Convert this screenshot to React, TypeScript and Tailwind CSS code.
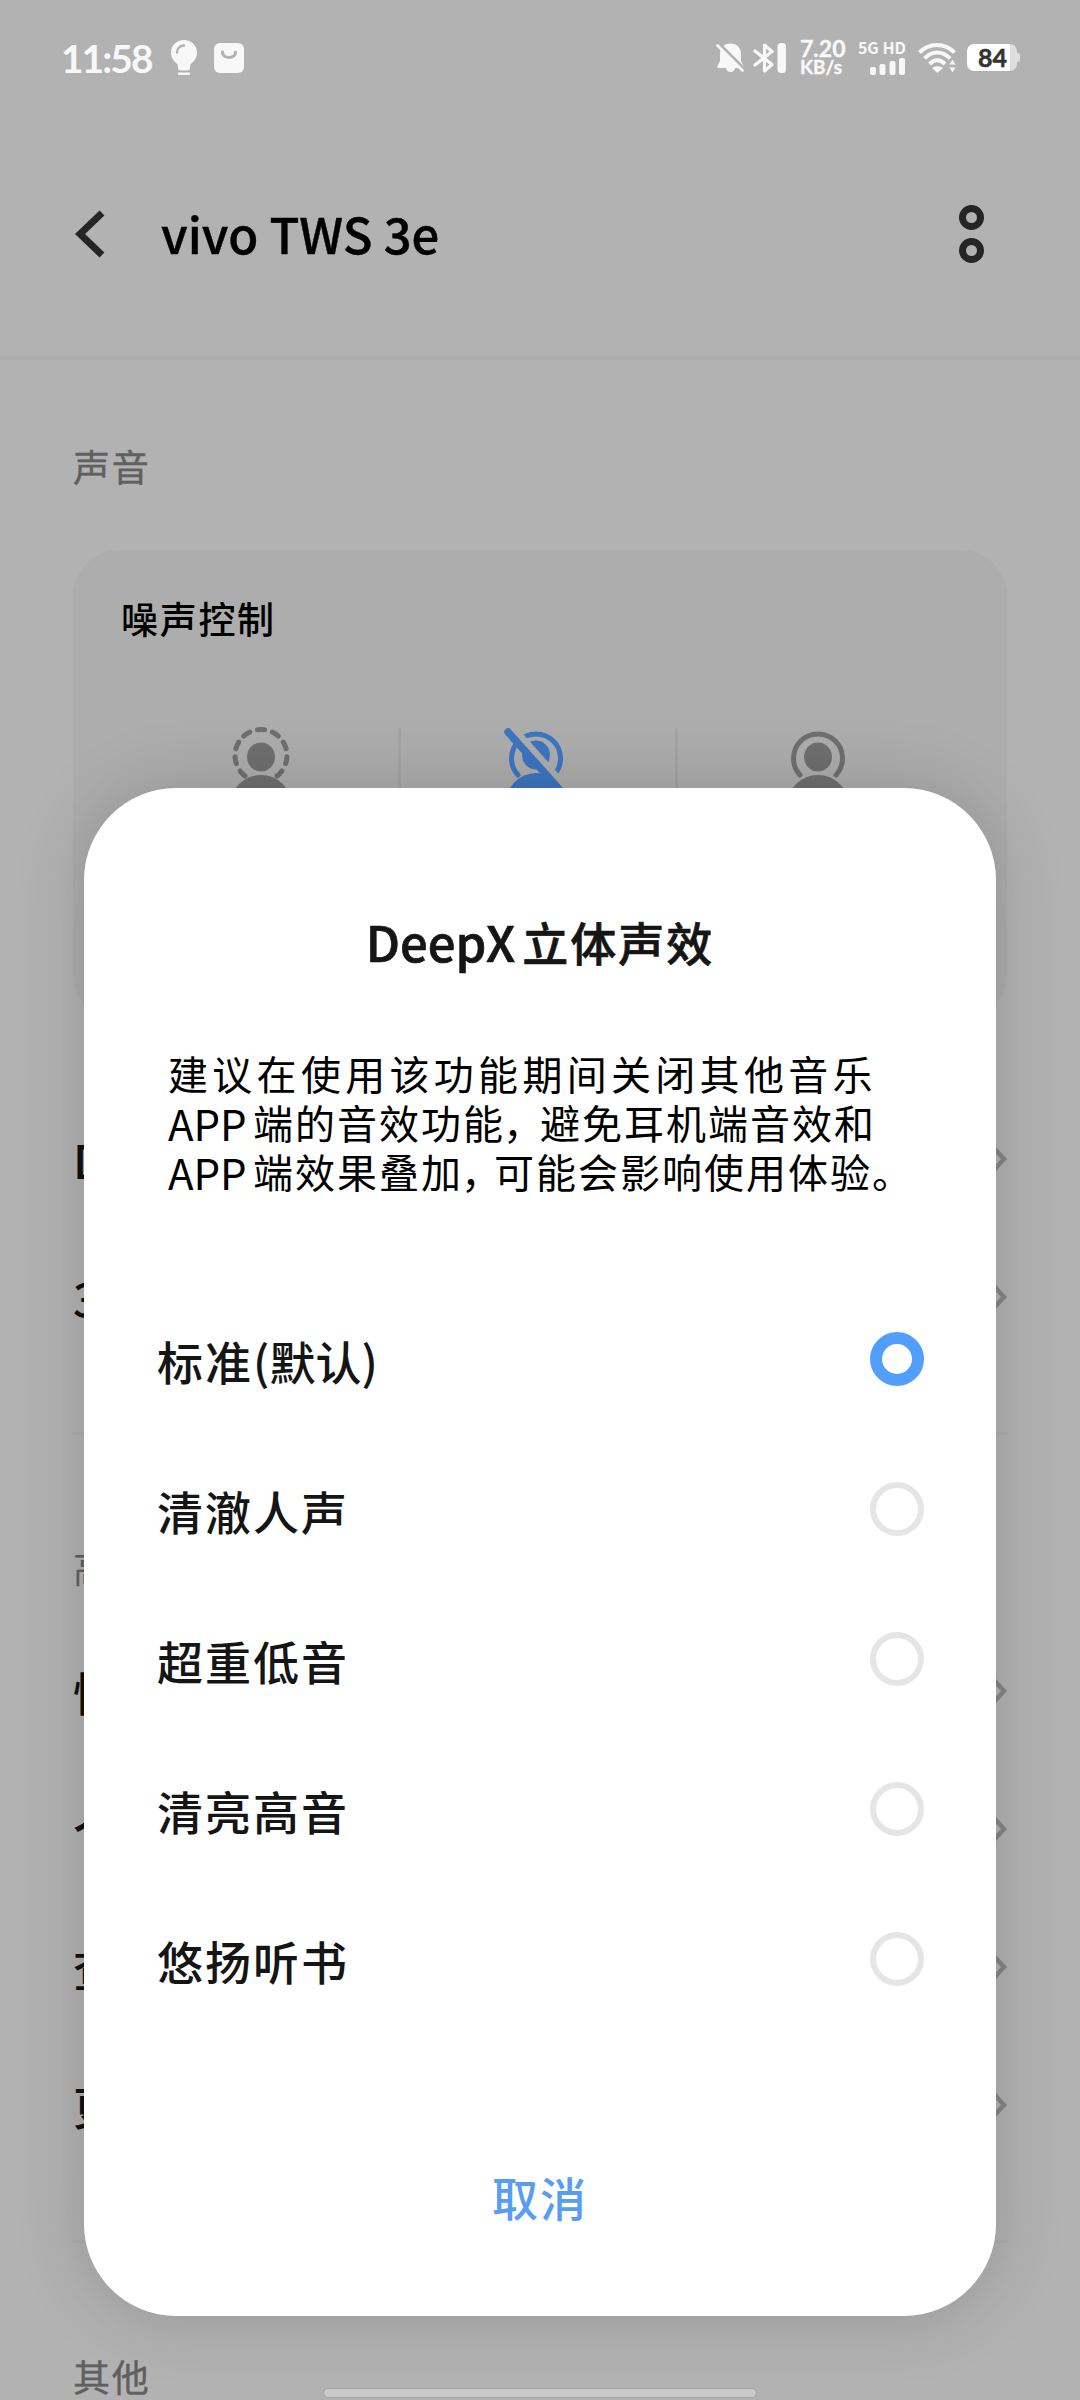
import React, { useState } from "react";

type Preset = {
  name: string;
  note?: string;
};

const presets: Preset[] = [
  { name: "标准", note: "(默认)" },
  { name: "清澈人声" },
  { name: "超重低音" },
  { name: "清亮高音" },
  { name: "悠扬听书" },
];

const StatusBar = () => (
  <div className="flex h-[115px] items-center justify-between pl-[61px] pr-[60px] text-[#f8f8f8]">
    <div className="flex items-center">
      <span className="w-[109px] whitespace-nowrap font-[Lato] text-[39px] font-bold leading-[48px] tracking-[-2px]">11:58</span>
      {/* light bulb */}
      <svg width="30" height="38" viewBox="0 0 30 38" className="ml-[-1px]">
        <path
          d="M15 1C7.600 1 2 6.500 2 13.500c0 5.500 3 8.500 6 11.500 1 1 1 2 1 4 0 1.500 1 2.500 2.500 2.500h7c1.500 0 2.500-1 2.500-2.500 0-2 0-3 1-4 3-3 6-6 6-11.500C28 6.500 22.400 1 15 1Z"
          fill="currentColor"
        />
        <path d="M8 13.500c0-4 3-7 7-7" fill="none" stroke="#b2b2b2" strokeWidth="2.400" strokeLinecap="round" />
        <path d="M10 34.700h10" stroke="currentColor" strokeWidth="2.400" strokeLinecap="round" />
      </svg>
      <svg width="30" height="30" viewBox="0 0 30 30" className="ml-[15px]">
        <rect width="30" height="30" rx="6" fill="currentColor" />
        <path d="M8.500 9c0 3.500 3 5.500 6.500 5.500s6.500-2 6.500-5.500" fill="none" stroke="#b2b2b2" strokeWidth="3.200" strokeLinecap="round" />
      </svg>
    </div>

    <div className="flex items-center">
      {/* muted bell */}
      <svg width="30" height="32" viewBox="0 0 30 32">
        <path
          d="M14.500 1.500C8 1.500 4 6 4 12v7l-2.500 5c-.5 1 0 2 1.500 2h7c.5 2.500 2 4 4.500 4s4-1.500 4.500-4h7c1.500 0 2-1 1.500-2L25 19v-7c0-6-4-10.500-10.500-10.500Z"
          fill="currentColor"
        />
        <path d="M3 1.500 29 27.500" stroke="#b2b2b2" strokeWidth="3" />
        <path d="M1.500 3.500 26.500 28.500" stroke="currentColor" strokeWidth="2.600" strokeLinecap="round" />
      </svg>
      <svg width="34" height="32" viewBox="0 0 34 32" className="ml-[7px]">
        <path
          d="M2 9 19 22.500 11.500 29V3L19 9.500 2 23"
          fill="none"
          stroke="currentColor"
          strokeWidth="3.200"
          strokeLinejoin="round"
          strokeLinecap="round"
        />
        <rect x="24.500" y="1" width="8.500" height="30" rx="3.500" fill="currentColor" />
      </svg>
      <div className="ml-[13px] flex w-[48px] flex-col font-[Lato] font-bold [-webkit-text-stroke:0.4px_#f8f8f8]">
        <span className="text-[23px] leading-[19px]">7.20</span>
        <span className="text-[19px] leading-[18px]">KB/s</span>
      </div>
      <div className="ml-[9px] flex w-[49px] flex-col items-end gap-[3px]">
        <span className="whitespace-nowrap font-['Noto_Sans_CJK_SC'] text-[16px] font-bold leading-[15px]">5G HD</span>
        <svg width="36" height="17" viewBox="0 0 36 17" fill="currentColor">
          <rect x="0" y="9" width="6" height="8" rx="2" />
          <rect x="9.500" y="6" width="6" height="11" rx="2" />
          <rect x="19.500" y="3" width="6" height="14" rx="2" />
          <rect x="29" y="0" width="6" height="17" rx="2" />
        </svg>
      </div>
      <svg width="40" height="32" viewBox="0 0 40 32" className="ml-[12px]">
        <g fill="none" stroke="currentColor" strokeWidth="4">
          <path d="M1.500 10.500C11.500 .5 26.500 .5 36.500 10.500" />
          <path d="M6.500 16.500C14 8.500 24.500 8.500 32 16.500" />
          <path d="M11.500 22c5-5 10.500-5 15.500 0" />
        </g>
        <path d="M14 26c3.500-2.500 7.500-2.500 11 0L19.500 31Z" fill="currentColor" />
        <path d="M34.500 17l4 6h-8zM34.500 31l4-6h-8z" fill="currentColor" stroke="#b2b2b2" strokeWidth="1" />
      </svg>
      <div className="ml-[9px] flex items-center">
        <div className="flex h-[27px] w-[50px] items-center justify-center rounded-[7px] bg-gradient-to-r from-white from-86% to-[#dedede] to-86% pl-[1px] font-[Lato] text-[25px] font-bold leading-none text-[#333] [-webkit-text-stroke:0.5px_#333]">
          84
        </div>
        <div className="h-[9px] w-[3px] rounded-r-[2px] bg-[#dedede]" />
      </div>
    </div>
  </div>
);

const Chevron = () => (
  <svg width="16" height="28" viewBox="0 0 16 28">
    <path d="M2 2 13 14 2 26" fill="none" stroke="#868686" strokeWidth="4.500" />
  </svg>
);

const SettingRow = ({ label }: { label: string }) => (
  <div className="flex h-[138px] items-center justify-between px-[73px]">
    <span className="text-[46px] font-medium text-[#111]">{label}</span>
    <Chevron />
  </div>
);

const Divider = () => <div className="mx-[72px] h-[3px] bg-[#adadad]" />;

const NoiseIcon = ({ type }: { type: "clear" | "off" | "on" }) => {
  const color = type === "off" ? "#3d75c0" : "#6f6f6f";
  return (
    <svg width="70" height="80" viewBox="0 0 70 80" fill="none">
      <ellipse cx="35" cy={type === "off" ? 35 : 37} rx="14" ry="14.500" fill={color} />
      <ellipse cx="35" cy="86" rx="31" ry={type === "off" ? 33 : 31} fill={color} />
      {type === "clear" ? (
        <path
          d="M19 56A26 26 0 1 1 51 56"
          pathLength="125"
          stroke={color}
          strokeWidth="5"
          strokeLinecap="round"
          strokeDasharray="7 7.750"
        />
      ) : (
        <path d="M17 55A24.500 24.500 0 1 1 53 55" stroke={color} strokeWidth="5" strokeLinecap="round" />
      )}
      {type === "off" && (
        <>
          <path d="M13 9 62 64" stroke="#adadad" strokeWidth="7" />
          <path d="M7 12 66 78" stroke={color} strokeWidth="7.500" strokeLinecap="round" />
        </>
      )}
    </svg>
  );
};

const Radio = ({ checked }: { checked: boolean }) =>
  checked ? (
    <div className="size-[54px] rounded-full border-[12px] border-[#529efc] bg-white" />
  ) : (
    <div className="size-[54px] rounded-full border-[6px] border-[#e5e5e5] bg-white" />
  );

const SoundDialog = () => {
  const [selected, setSelected] = useState(0);

  return (
    <div className="absolute left-[84px] top-[788px] flex h-[1528px] w-[912px] flex-col rounded-[92px] bg-white shadow-[0_0_70px_rgba(0,0,0,0.17)]">
      <h2 className="mt-[118px] flex items-center justify-center gap-[7px] leading-[70px] text-[#151515] [-webkit-text-stroke:0.7px_#151515]">
        <span className="text-[49px] font-medium">DeepX</span>
        <span className="text-[46px] font-medium tracking-[2px]">立体声效</span>
      </h2>

      <div className="mt-[73px] flex flex-col pl-[84px] text-[40px] leading-[49px] text-black">
        <p className="whitespace-nowrap tracking-[4.300px]">建议在使用该功能期间关闭其他音乐</p>
        <p className="flex whitespace-nowrap tracking-[2px]">
          <span className="w-[85px] text-[42px] tracking-normal">APP</span>
          <span>端的音效功能</span>
          <span className="w-[35px] -indent-[2px]">，</span>
          <span>避免耳机端音效和</span>
        </p>
        <p className="flex whitespace-nowrap tracking-[2px]">
          <span className="w-[85px] text-[42px] tracking-normal">APP</span>
          <span>端效果叠加</span>
          <span className="w-[31px] -indent-[2px]">，</span>
          <span>可能会影响使用体验。</span>
        </p>
      </div>

      <ul className="mt-[88px] flex flex-col">
        {presets.map((preset, index) => (
          <li
            key={preset.name}
            onClick={() => setSelected(index)}
            className="flex h-[150px] items-center justify-between pl-[73px] pr-[72px]"
          >
            <span className="pt-[3px] text-[46px] font-medium tracking-[2px] text-[#151515]">
              {preset.name}
              {preset.note && <span className="tracking-[0px]">{preset.note}</span>}
            </span>
            <Radio checked={index === selected} />
          </li>
        ))}
      </ul>

      <button className="mt-[127px] text-[46px] font-medium leading-[70px] tracking-[2px] text-[#579df2]">取消</button>
    </div>
  );
};

export default function App() {
  return (
    <div className="relative h-[2400px] w-[1080px] overflow-hidden bg-[#b2b2b2] font-['Noto_Sans_CJK_SC',sans-serif]">
      <StatusBar />

      <header className="flex h-[241px] items-center pb-[3px] pl-[75px] pr-[96px]">
        <svg width="31" height="50" viewBox="0 0 31 50">
          <path d="M27 4 5 25 27 46" fill="none" stroke="#252525" strokeWidth="7" />
        </svg>
        <h1 className="ml-[55px] pb-[3px] text-[49px] font-medium text-black [-webkit-text-stroke:0.4px_#000]">vivo TWS 3e</h1>
        <div className="ml-auto flex flex-col gap-[8px]">
          <div className="size-[25px] rounded-full border-[7px] border-[#252525]" />
          <div className="size-[25px] rounded-full border-[7px] border-[#252525]" />
        </div>
      </header>
      <div className="h-[4px] bg-[#adadad]" />

      <div className="mt-[76px] pl-[73px] text-[37px] leading-[60px] tracking-[1.700px] text-[#606060] [-webkit-text-stroke:0.4px_#606060]">声音</div>

      <div className="mx-[73px] mt-[54px] h-[470px] rounded-[46px] bg-[#adadad]">
        <div className="pl-[48px] pt-[38px] text-[37px] font-medium leading-[60px] tracking-[1.700px] text-black">噪声控制</div>
        <div className="mt-[72px] flex pl-[51px]">
          <div className="flex w-[274px] justify-center">
            <NoiseIcon type="clear" />
          </div>
          <div className="mt-[8px] h-[150px] w-[3px] bg-[#a4a4a4]" />
          <div className="flex w-[274px] justify-center pr-[5px]">
            <NoiseIcon type="off" />
          </div>
          <div className="mt-[8px] h-[150px] w-[3px] bg-[#a4a4a4]" />
          <div className="flex w-[279px] justify-center">
            <NoiseIcon type="on" />
          </div>
        </div>
      </div>

      <div className="mt-[70px]">
        <SettingRow label="DeepX" />
        <SettingRow label="3D" />
      </div>

      <div className="mt-[66px]">
        <Divider />
      </div>
      <div className="mt-[102px] pl-[73px] text-[37px] leading-[60px] text-[#606060]">高</div>
      <div className="mt-[25px]">
        <SettingRow label="快" />
        <SettingRow label="个" />
        <SettingRow label="查" />
        <SettingRow label="更" />
      </div>
      <div className="mt-[66px]">
        <Divider />
      </div>
      <div className="mt-[103px] pl-[73px] text-[37px] leading-[60px] tracking-[1.700px] text-[#606060] [-webkit-text-stroke:0.4px_#606060]">其他</div>

      <SoundDialog />

      {/* gesture bar */}
      <div className="absolute left-[323px] top-[2388px] h-[10px] w-[434px] rounded-full border border-[#a3a3a3] bg-[#cacaca]" />
    </div>
  );
}
